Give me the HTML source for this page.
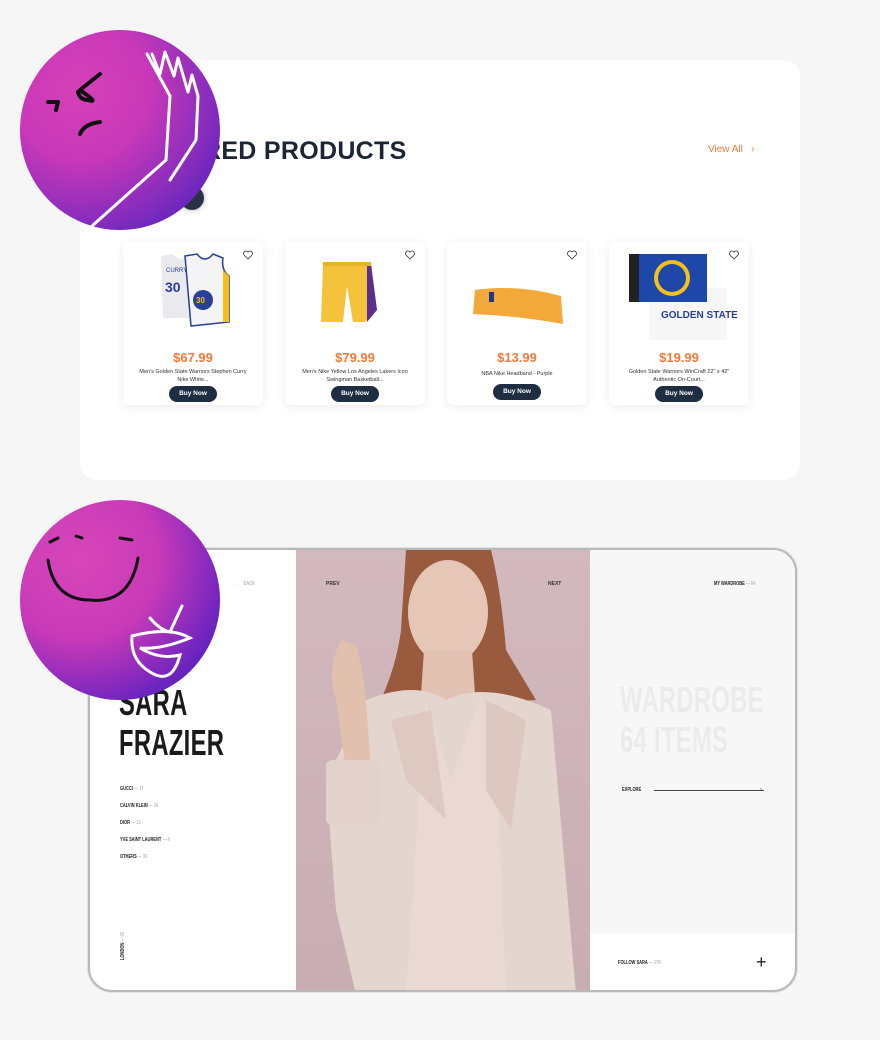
<!DOCTYPE html>
<html><head><meta charset="utf-8"><style>
*{margin:0;padding:0;box-sizing:border-box}
body{width:880px;height:1040px;background:#f6f6f6;font-family:"Liberation Sans",sans-serif;position:relative;overflow:hidden}
.card{position:absolute;left:80px;top:60px;width:720px;height:420px;background:#fff;border-radius:16px}
.title{position:absolute;left:120px;top:137px;font-size:25px;font-weight:bold;color:#1b2536;letter-spacing:0.3px}
.view{position:absolute;left:708px;top:144px;font-size:10px;color:#f07a3a}
.p{position:absolute;top:242px;width:140px;height:163px;background:#fff;border-radius:6px;box-shadow:0 2px 10px rgba(0,0,0,.08);text-align:center}
.p .pr{position:absolute;top:108px;left:0;right:0;font-size:13px;font-weight:bold;color:#f07a3a}
.p .nm{position:absolute;top:126px;left:14px;right:14px;font-size:5.5px;line-height:8px;color:#333}
.p .bt{position:absolute;top:144px;left:46px;width:48px;height:16px;border-radius:8px;background:#1f2d43;color:#fff;font-size:6.5px;line-height:16px;font-weight:bold}
.p svg.h{position:absolute;right:10px;top:8px}
.p .im{position:absolute;left:0;top:8px}
.dev{position:absolute;left:88px;top:548px;width:709px;height:444px;border-radius:24px;border:2px solid #b9b9b9;background:#fff;overflow:hidden;box-shadow:0 0 0 1px #e2e2e2}
.cond{font-family:"Liberation Sans Narrow","Liberation Sans",sans-serif;font-weight:bold;color:#222;font-size:5px;position:absolute;transform:scaleX(.8);transform-origin:left}
.big{position:absolute;font-family:"Liberation Sans Narrow","Liberation Sans",sans-serif;font-weight:bold;font-size:36px;line-height:40px;color:#1a1a1a;transform:scaleX(.66);transform-origin:left;letter-spacing:.5px}
.circ{position:absolute;width:200px;height:200px;border-radius:50%;overflow:hidden}
</style></head><body>
<div class="card"></div>
<div class="title">FEATURED PRODUCTS</div>
<div class="view">View All &nbsp;&nbsp;›</div>
<div style="position:absolute;left:180px;top:186px;width:24px;height:24px;border-radius:50%;background:#2a3345;box-shadow:0 0 6px rgba(0,0,0,.3)"></div>

<div class="p" style="left:123px">
<svg class="im" width="140" height="100" viewBox="0 0 140 100"><path d="M38 6 L50 4 Q58 14 66 4 L72 8 L72 68 L40 68 Z" fill="#e9e9ee"/><path d="M62 6 L74 4 Q82 14 90 4 L100 8 Q98 20 106 26 L106 72 L68 76 Z" fill="#f4f4f6" stroke="#2a3f96" stroke-width="1.5"/><path d="M100 20 L106 26 L106 72 L100 72 Z" fill="#f5c118"/><text x="42" y="42" font-size="14" font-weight="bold" fill="#2a3f96">30</text><text x="43" y="22" font-size="6" fill="#2a3f96">CURRY</text><circle cx="80" cy="50" r="10" fill="#2a3f96"/><text x="73" y="53" font-size="8" font-weight="bold" fill="#f5c118">30</text></svg>
<svg class="h" width="10" height="10" viewBox="0 0 10 10"><path d="M5 9 L1 5 A2.2 2.2 0 0 1 5 2 A2.2 2.2 0 0 1 9 5 Z" fill="none" stroke="#333" stroke-width=".8"/></svg>
<div class="pr">$67.99</div><div class="nm">Men's Golden State Warriors Stephen Curry Nike White...</div><div class="bt">Buy Now</div></div>

<div class="p" style="left:285px">
<svg class="im" width="140" height="100" viewBox="0 0 140 100"><path d="M38 14 L86 14 L92 60 L80 72 L68 72 L62 36 L58 72 L36 72 Z" fill="#f4c33b"/><path d="M82 14 L86 14 L92 60 L82 72 Z" fill="#5a2f8e"/><rect x="38" y="12" width="48" height="4" fill="#e8b42e"/></svg>
<svg class="h" width="10" height="10" viewBox="0 0 10 10"><path d="M5 9 L1 5 A2.2 2.2 0 0 1 5 2 A2.2 2.2 0 0 1 9 5 Z" fill="none" stroke="#333" stroke-width=".8"/></svg>
<div class="pr">$79.99</div><div class="nm">Men's Nike Yellow Los Angeles Lakers Icon Swingman Basketball...</div><div class="bt">Buy Now</div></div>

<div class="p" style="left:447px">
<svg class="im" width="140" height="100" viewBox="0 0 140 100"><path d="M28 40 Q70 34 114 46 L116 74 Q72 66 26 64 Z" fill="#f2a93a"/><rect x="42" y="42" width="5" height="10" fill="#1d3a8a"/></svg>
<svg class="h" width="10" height="10" viewBox="0 0 10 10"><path d="M5 9 L1 5 A2.2 2.2 0 0 1 5 2 A2.2 2.2 0 0 1 9 5 Z" fill="none" stroke="#333" stroke-width=".8"/></svg>
<div class="pr">$13.99</div><div class="nm" style="top:128px">NBA Nike Headband - Purple</div><div class="bt" style="top:142px">Buy Now</div></div>

<div class="p" style="left:609px">
<svg class="im" width="140" height="100" viewBox="0 0 140 100"><rect x="40" y="38" width="78" height="52" fill="#f6f6f6"/><text x="52" y="68" font-size="10" font-weight="bold" fill="#2a3f96">GOLDEN STATE</text><rect x="20" y="4" width="78" height="48" fill="#1d47a8"/><rect x="20" y="4" width="10" height="48" fill="#222"/><circle cx="63" cy="28" r="18" fill="#f5c118"/><circle cx="63" cy="28" r="14" fill="#1d47a8"/></svg>
<svg class="h" width="10" height="10" viewBox="0 0 10 10"><path d="M5 9 L1 5 A2.2 2.2 0 0 1 5 2 A2.2 2.2 0 0 1 9 5 Z" fill="none" stroke="#333" stroke-width=".8"/></svg>
<div class="pr">$19.99</div><div class="nm">Golden State Warriors WinCraft 22" x 42" Authentic On-Court...</div><div class="bt">Buy Now</div></div>

<div class="dev">
 <div style="position:absolute;left:206px;top:0;width:294px;height:444px;background:#cbb3b7">
 <svg width="294" height="444" viewBox="0 0 294 444">
  <defs><linearGradient id="bg" x1="0" y1="0" x2="0" y2="1"><stop offset="0" stop-color="#d2b9bd"/><stop offset="1" stop-color="#c8aeb2"/></linearGradient></defs>
  <rect width="294" height="444" fill="url(#bg)"/>
  <path d="M110 0 L195 0 Q205 40 210 100 Q228 130 240 150 L80 160 Q100 120 105 80 Z" fill="#9a5a3e"/>
  <ellipse cx="152" cy="62" rx="40" ry="52" fill="#e6c7b7"/>
  <path d="M128 100 L176 100 L180 160 L124 160 Z" fill="#e2c3b3"/>
  <path d="M70 150 Q120 130 150 150 Q190 130 255 160 L280 444 L60 444 L40 360 L30 230 Z" fill="#e5d5cf"/>
  <path d="M130 150 L155 230 L185 145 L200 200 L210 444 L110 444 Z" fill="#ead9d3"/>
  <path d="M95 170 L135 160 L150 270 L110 230 Z" fill="#ddc9c2"/>
  <path d="M190 150 L230 170 L215 280 L190 240 Z" fill="#dcc8c1"/>
  <path d="M45 90 Q30 120 40 150 L50 220 L75 220 L70 150 Q65 110 60 95 Z" fill="#e2c0ae"/>
  <rect x="30" y="210" width="55" height="65" rx="6" fill="#e3d2cc"/>
  <text x="30" y="35" font-size="5" font-weight="bold" fill="#333">PREV</text>
  <text x="252" y="35" font-size="5" font-weight="bold" fill="#333">NEXT</text>
 </svg></div>
 <div style="position:absolute;left:500px;top:0;width:209px;height:384px;background:#f7f7f7"></div>
 <div class="cond" style="left:146px;top:31px;color:#bbb">← &nbsp;&nbsp;BACK</div>
 <div class="big" style="left:29px;top:133px">SARA<br>FRAZIER</div>
 <div class="cond" style="left:30px;top:236px">GUCCI <span style="color:#bbb">— 17</span></div>
 <div class="cond" style="left:30px;top:253px">CALVIN KLEIN <span style="color:#bbb">— 26</span></div>
 <div class="cond" style="left:30px;top:270px">DIOR <span style="color:#bbb">— 12</span></div>
 <div class="cond" style="left:30px;top:287px">YVE SAINT LAURENT <span style="color:#bbb">— 8</span></div>
 <div class="cond" style="left:30px;top:304px">OTHERS <span style="color:#bbb">— 31</span></div>
 <div class="cond" style="left:30px;top:410px;transform:rotate(-90deg) scaleX(.8);transform-origin:left top">LONDON <span style="color:#bbb">— 05</span></div>
 <div class="cond" style="left:624px;top:31px">MY WARDROBE <span style="color:#bbb">— 64</span></div>
 <div class="big" style="left:530px;top:130px;color:#ebebeb">WARDROBE<br>64 ITEMS</div>
 <div class="cond" style="left:532px;top:237px">EXPLORE</div>
 <div style="position:absolute;left:564px;top:240px;width:110px;height:1px;background:#444"></div>
 <div style="position:absolute;left:670px;top:237px;font-size:6px;line-height:6px;color:#444">›</div>
 <div class="cond" style="left:528px;top:410px">FOLLOW SARA <span style="color:#bbb">— 17K</span></div>
 <div style="position:absolute;left:666px;top:402px;font-size:18px;color:#222;font-weight:300">+</div>
</div>

<div class="circ" style="left:20px;top:30px;background:radial-gradient(circle at 30% 30%,#d640b8 0%,#c838b8 35%,#8a2dbd 65%,#3d1dbd 100%)">
<svg width="200" height="200" viewBox="0 0 200 200" fill="none" stroke-linecap="round" stroke-linejoin="round">
 <path d="M28 72 L38 72 L36 80 M80 44 L60 60 Q80 74 68 70 Q60 70 58 62 M80 92 Q64 94 60 104" stroke="#111" stroke-width="4"/>
 <path d="M72 196 L146 130 L150 66 L127 24 M132 24 L140 44 L145 22 L154 46 L158 28 L168 62 L172 45 L178 66 L176 110 L150 150" stroke="#fff" stroke-width="3"/>
</svg></div>
<div class="circ" style="left:20px;top:500px;background:radial-gradient(circle at 30% 30%,#d846b8 0%,#c83ab8 40%,#7b27bf 70%,#2a18bd 100%)">
<svg width="200" height="200" viewBox="0 0 200 200" fill="none" stroke-linecap="round">
 <path d="M30 42 L38 38 M56 36 L62 38 M100 38 L112 40 M28 60 Q34 100 70 100 Q110 104 118 58" stroke="#111" stroke-width="3"/>
 <path d="M130 118 Q140 130 150 132 L162 106 M112 136 Q150 126 170 138 Q140 150 120 148 Q140 160 160 155 Q152 186 130 172 Q110 160 112 136" stroke="#fff" stroke-width="3"/>
</svg></div>
</body></html>
